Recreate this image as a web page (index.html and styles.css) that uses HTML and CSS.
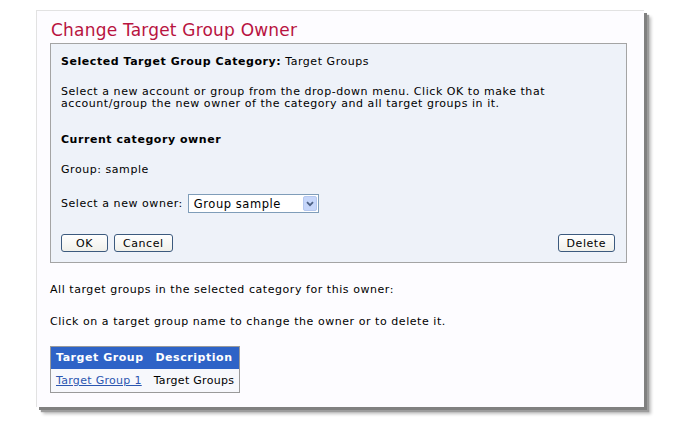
FILE: index.html
```html
<!DOCTYPE html>
<html lang="en">
<head>
    <meta charset="UTF-8">
    <title>Change Target Group Owner</title>
    <link rel="stylesheet" href="styles.css">
</head>
<body>
    <div class="page">
        <h1>Change Target Group Owner</h1>

        <!-- Owner box -->
        <div class="owner-box">
            <p class="category"><b>Selected Target Group Category:</b> Target Groups</p>
            <p class="intro">Select a new account or group from the drop-down menu. Click OK to make that<br>account/group the new owner of the category and all target groups in it.</p>
            <p class="current-title"><b>Current category owner</b></p>
            <p class="current">Group: sample</p>
            <div class="owner-row">
                <span>Select a new owner:</span>
                <div class="select">
                    <span class="select-value">Group sample</span>
                    <span class="select-arrow">
                        <svg width="8" height="6" viewBox="0 0 8 6"><path d="M1 1.2 L4 4.2 L7 1.2" fill="none" stroke="#4d6185" stroke-width="1.8"/></svg>
                    </span>
                </div>
            </div>
            <div class="buttons">
                <button class="btn btn-ok">OK</button>
                <button class="btn">Cancel</button>
                <button class="btn btn-delete">Delete</button>
            </div>
        </div>

        <p class="note first">All target groups in the selected category for this owner:</p>
        <p class="note">Click on a target group name to change the owner or to delete it.</p>

        <table class="groups">
            <tr>
                <th>Target Group</th>
                <th>Description</th>
            </tr>
            <tr>
                <td><a href="#">Target Group 1</a></td>
                <td>Target Groups</td>
            </tr>
        </table>
    </div>
</body>
</html>
```

FILE: styles.css
```css
html {
    background: #fff;
}
body {
    margin: 0;
    padding: 10px 0 20px 36px;
    min-height: 394px;
    background: #fff;
    font-family: "DejaVu Sans", Verdana, sans-serif;
    font-size: 11px;
    line-height: 12px;
    letter-spacing: 0.55px;
    color: #000;
}
.page {
    width: 594px;
    padding: 0 0 14px 13px;
    background: #fdfcff;
    border-top: 1px solid #e2e2e2;
    border-left: 1px solid #e2e2e2;
    box-shadow: 3px 3px 0 #808080, 5px 5px 1px #9c9c9c, 7px 7px 3px rgba(0,0,0,0.25);
}
h1 {
    margin: 0;
    padding: 7px 0 0 1px;
    height: 25px;
    font-size: 17px;
    line-height: 24px;
    font-weight: normal;
    letter-spacing: 0.2px;
    color: #b8133f;
}
.owner-box {
    width: 555px;
    padding: 12px 10px 10px 10px;
    background: #eef2f9;
    border: 1px solid #a4a4a4;
}
.owner-box p {
    margin: 0;
}
.intro {
    margin-top: 18px !important;
}
.current-title {
    margin-top: 24px !important;
}
.current {
    margin-top: 18px !important;
}
.owner-row {
    display: flex;
    align-items: center;
    gap: 5px;
    margin-top: 18px;
}
.select {
    display: flex;
    align-items: center;
    justify-content: space-between;
    width: 129px;
    height: 17px;
    background: #fff;
    border: 1px solid #7f9db9;
}
.select-value {
    padding-left: 5px;
    font-size: 11.5px;
}
.select-arrow {
    display: flex;
    align-items: center;
    justify-content: center;
    width: 14px;
    height: 15px;
    margin-right: 1px;
    background: #c6d6fa;
    border: 1px solid #b5c8ef;
    box-sizing: border-box;
    border-radius: 2px;
}
.buttons {
    display: flex;
    gap: 6px;
    margin-top: 21px;
}
.btn {
    height: 18px;
    padding: 0 8px;
    font-family: "DejaVu Sans", Verdana, sans-serif;
    font-size: 11px;
    letter-spacing: 0.55px;
    color: #000;
    background: linear-gradient(#ffffff, #f0f0ea);
    border: 1px solid #3c5a7e;
    border-radius: 3px;
}
.btn-ok {
    width: 47px;
}
.btn-delete {
    margin-left: auto;
    margin-right: 1px;
}
.note {
    margin: 20px 0 0;
}
.note.first {
    margin-top: 21px;
}
.groups {
    margin-top: 18px;
    border-collapse: collapse;
    border: 1px solid #9a9a9a;
    background: #f7f8fc;
}
.groups th {
    padding: 5px 5px 5px;
    background: #2e63c7;
    color: #fff;
    font-size: 11px;
    text-align: center;
}
.groups td {
    padding: 6px 5px 5px;
    font-size: 11px;
    letter-spacing: 0.3px;
}
.groups a {
    color: #2b56b0;
}
```
